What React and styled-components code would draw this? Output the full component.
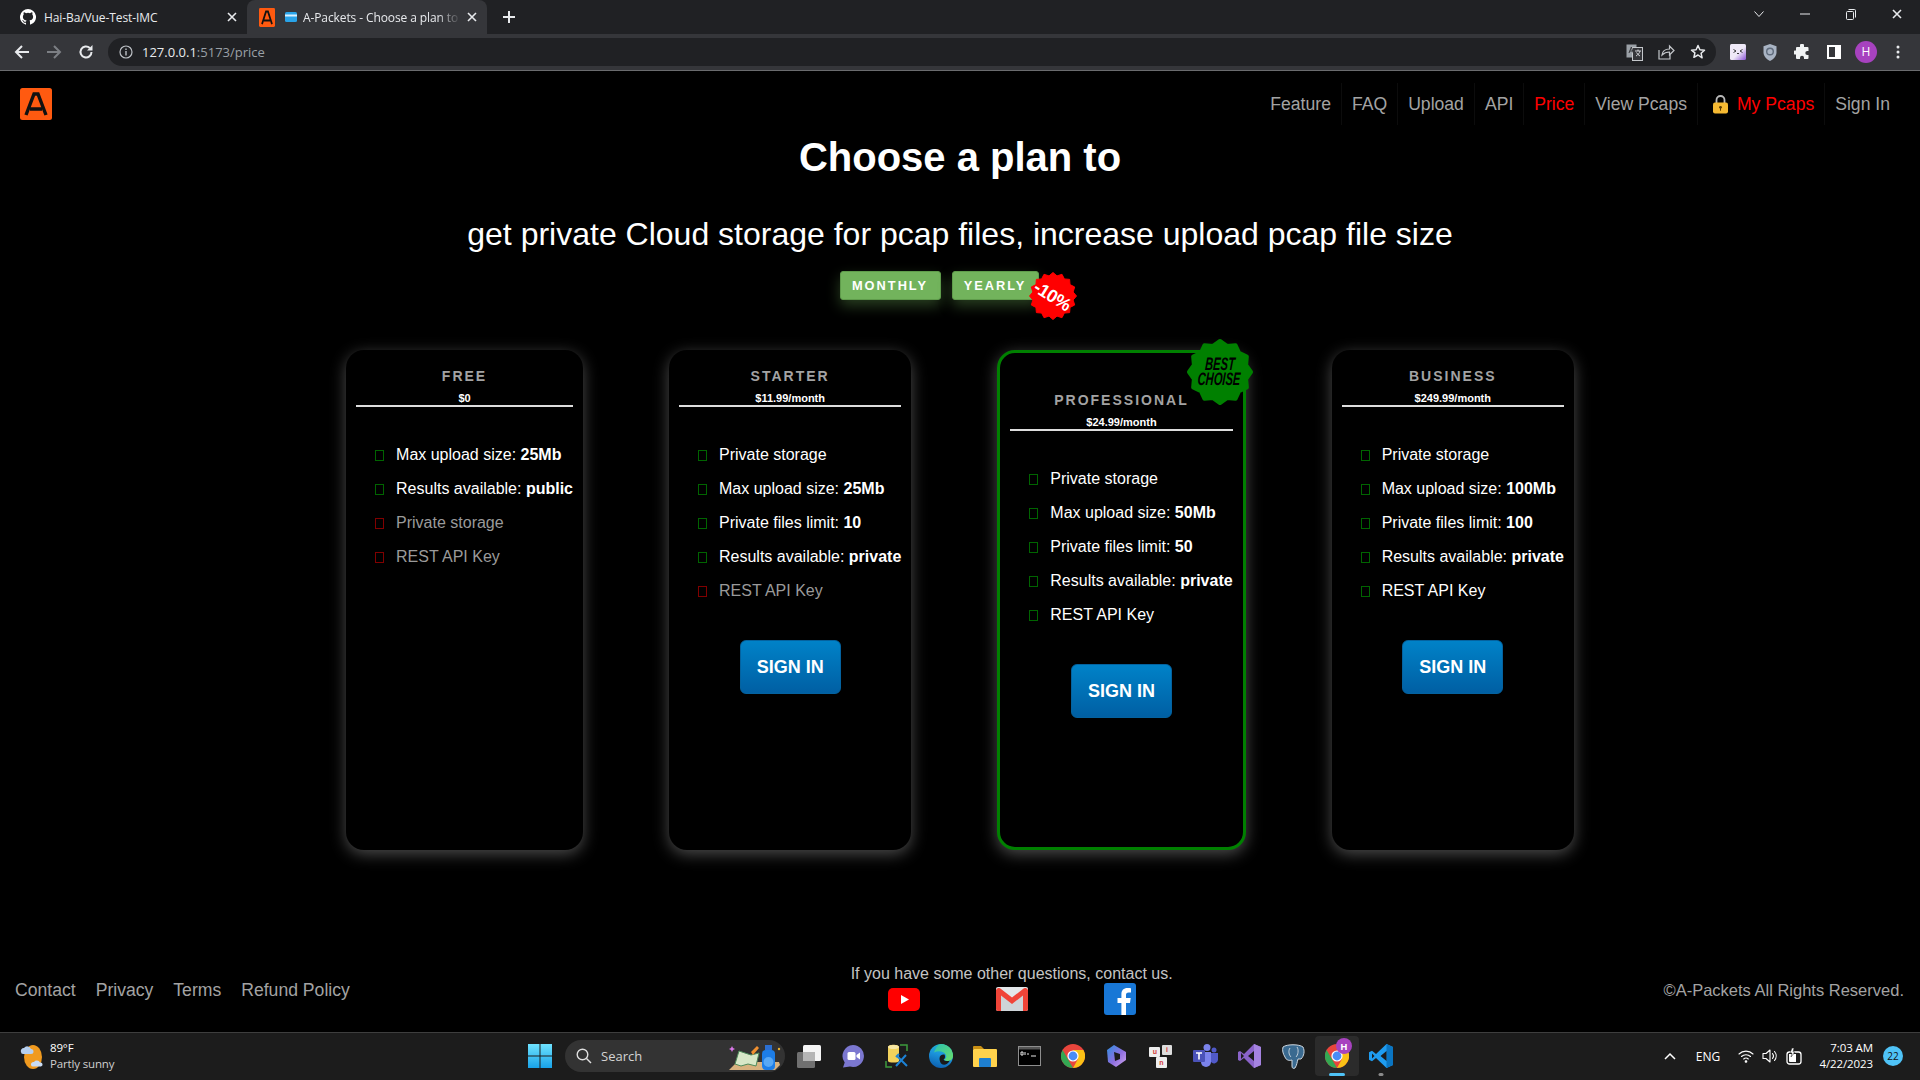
import React from "react";
import styled, { createGlobalStyle } from "styled-components";

const Global = createGlobalStyle`
  html, body { margin: 0; padding: 0; background: #000; }
  body { font-family: "Liberation Sans", Arial, sans-serif; }
  * { box-sizing: border-box; }
`;

const Screen = styled.div`
  width: 1920px; height: 1080px; display: flex; flex-direction: column; overflow: hidden; background: #000;
`;

/* ---------- browser chrome ---------- */
const TabStrip = styled.div`
  height: 34px; background: #202124; display: flex; align-items: stretch; flex: none;
  font: 12px "Open Sans", "Noto Sans", sans-serif; color: #e8eaed;
`;
const Tab = styled.div`
  width: ${p => p.$w}px; display: flex; align-items: center; position: relative;
  padding-left: ${p => p.$pl}px; padding-right: 10px; gap: ${p => p.$gap || 8}px;
  background: ${p => (p.$active ? "#35363a" : "transparent")};
  border-radius: 8px 8px 0 0;
`;
const TabIcons = styled.div`
  display: flex; align-items: center; gap: 10px; flex: none;
`;
const TabTitle = styled.span`
  flex: 1; min-width: 0; white-space: nowrap; overflow: hidden; letter-spacing: -0.1px;
  ${p => p.$fade && "-webkit-mask-image: linear-gradient(90deg,#000 85%,transparent); mask-image: linear-gradient(90deg,#000 85%,transparent);"}
`;
const NewTab = styled.div`
  width: 44px; display: flex; align-items: center; justify-content: center;
`;
const WindowControls = styled.div`
  margin-left: auto; display: flex; align-items: center; height: 28px; padding-right: 0;
`;
const WinBtn = styled.div`
  width: 46px; height: 28px; display: flex; align-items: center; justify-content: center;
`;
const ToolBar = styled.div`
  height: 37px; background: #35363a; border-bottom: 1px solid #6a6b6e; display: flex; align-items: center; flex: none;
`;
const NavBtn = styled.div`
  width: 32px; height: 28px; display: flex; align-items: center; justify-content: center;
`;
const NavBtns = styled.div`
  display: flex; padding-left: 6px; width: 108px;
`;
const Omnibox = styled.div`
  width: 1608px; height: 28px; background: #202124; border-radius: 14px; display: flex; align-items: center;
  padding: 0 2px 0 11px; font: 13px "Open Sans", "Noto Sans", sans-serif;
`;
const Url = styled.span`
  margin-left: 9px; color: #9aa0a6;
  b { color: #e8eaed; font-weight: 400; }
`;
const OmniRight = styled.div`
  margin-left: auto; display: flex; align-items: center; gap: 0;
`;
const ToolIcon = styled.div`
  width: ${p => p.$w || 32}px; height: 28px; display: flex; align-items: center; justify-content: center;
`;
const Extensions = styled.div`
  display: flex; align-items: center; padding-left: 6px;
`;

/* ---------- page ---------- */
const Main = styled.main`
  flex: 1; display: flex; flex-direction: column; background: #000; color: #fff; min-height: 0;
`;
const Header = styled.header`
  height: 66px; flex: none; display: flex; align-items: center; justify-content: space-between; padding: 0 20px;
`;
const NavList = styled.nav`
  display: flex; align-items: center; height: 42px;
`;
const NavLink = styled.a`
  height: 42px; display: flex; align-items: center; gap: 9px; padding: 0 10px 0 ${p => (p.$wide ? 15 : 10)}px;
  border-right: ${p => (p.$last ? "none" : "1px solid #0c0c0c")};
  font-size: 17.6px; color: ${p => (p.$red ? "#f00" : "#a3a3a3")};
`;
const Title = styled.h1`
  margin: 0; height: 40px; line-height: 41px; text-align: center; font-size: 40px; font-weight: 700; color: #fff;
`;
const Subtitle = styled.h2`
  margin: 37px 0 0; height: 40px; line-height: 40px; text-align: center; font-size: 32px; font-weight: 400; color: #fff;
`;
const Toggle = styled.div`
  margin-top: 17px; display: flex; justify-content: center; align-items: flex-start; gap: 11px;
`;
const PeriodBtn = styled.button`
  width: ${p => p.$w}px; height: 29px; padding: 0; border: 1px solid #5f9c4b; border-radius: 3px; background: #72b35c; color: #fff;
  font: 700 12.8px "Liberation Sans", sans-serif; letter-spacing: 2px; white-space: nowrap;
  box-shadow: 0 6px 14px rgba(114, 179, 92, 0.35);
`;
const Burst = styled.div`
  position: relative; flex: none; width: ${p => p.$size}px; height: ${p => p.$size}px;
  display: flex; align-items: center; justify-content: center;
  svg { position: absolute; inset: 0; }
`;
const SaleBadge = styled(Burst)`
  margin: 1px 4px 0 -21px; z-index: 1;
`;
const SaleText = styled.span`
  position: relative; color: #fff; font-weight: 700; font-size: 18px; transform: rotate(32deg); white-space: nowrap; letter-spacing: -0.5px;
`;
const Cards = styled.section`
  margin-top: 30px; display: flex; justify-content: center; gap: 86px;
`;
const Card = styled.article`
  height: 500px; position: relative; background: #000; border-radius: 18px; padding: ${p => (p.$best ? "37px 10px 0" : "16px 10px 0")};
  border: ${p => (p.$best ? "3px solid #008000" : "none")};
  box-shadow: 0 4px 16px rgba(255, 255, 255, 0.3);
  display: flex; flex-direction: column; align-items: stretch;
`;
const BestBadge = styled(Burst)`
  position: absolute; top: -14px; right: -10px;
`;
const BestText = styled.span`
  position: relative; color: #000; font: italic 700 18px/15px "Liberation Sans", sans-serif;
  text-align: center; transform: scaleX(0.62) skewX(-6deg); white-space: nowrap; text-transform: uppercase;
`;
const PlanHead = styled.div`
  text-align: center; border-bottom: 2px solid #ddd; height: 41px;
`;
const PlanName = styled.div`
  font-weight: 700; font-size: 14px; line-height: 20px; letter-spacing: 2px; color: #a3a3a3;
`;
const PlanPrice = styled.div`
  margin-top: 5px; font-weight: 700; font-size: 11px; line-height: 14px; color: #fff;
`;
const Features = styled.ul`
  list-style: none; margin: 31px 0 0; padding: 0 0 0 19px;
`;
const Feature = styled.li`
  height: 34px; display: flex; align-items: center; gap: 12px; font-size: 16px; white-space: nowrap;
  color: ${p => (p.$off ? "#9a9a9a" : "#fff")};
  b { font-weight: 700; }
`;
const Tofu = styled.i`
  display: block; flex: none; width: 9px; height: 11px; border: 1px solid ${p => (p.$off ? "#800000" : "#006400")};
`;
const SignIn = styled.button`
  align-self: center; margin-top: 32px; width: 101px; height: 54px; border: 1px solid #04629f; border-radius: 6px;
  background: linear-gradient(#0082c8, #005fa3); color: #fff; font: 700 18px "Liberation Sans", sans-serif;
`;
const Footer = styled.footer`
  margin-top: auto; padding: 0 16px 17px 5px; display: flex; justify-content: space-between; align-items: center;
  color: #a3a3a3; font-size: 17.6px;
`;
const FootLinks = styled.div`
  display: flex;
`;
const FootLink = styled.a`
  padding: 0 10px; color: #a3a3a3;
`;
const Contact = styled.div`
  display: flex; flex-direction: column; align-items: center; gap: 1px; font-size: 16px; color: #c4c4c4;
  line-height: 17px;
`;
const Socials = styled.div`
  display: flex; align-items: center; gap: 76px; height: 32px;
`;
const Copy = styled.div`
  font-size: 16.5px; color: #a3a3a3;
`;

/* ---------- taskbar ---------- */
const Taskbar = styled.div`
  height: 48px; flex: none; background: #1c1c1c; border-top: 1px solid #3e3e3e; display: flex; align-items: center;
  padding-bottom: 1px;
  font: 12px "Open Sans", "Noto Sans", sans-serif; color: #fff;
`;
const Weather = styled.div`
  flex: 0 0 518px; display: flex; align-items: center; gap: 6px; padding-left: 20px;
`;
const WeatherText = styled.div`
  font-size: 11.5px; line-height: 16px; letter-spacing: -0.15px;
  span { display: block; color: #cfcfcf; }
`;
const Slot = styled.div`
  width: 44px; height: 40px; flex: none; position: relative; display: flex; align-items: center; justify-content: center;
  border-radius: 4px;
  background: ${p => (p.$active ? "#2b2b2b" : "transparent")};
`;
const Indicator = styled.i`
  position: absolute; bottom: 0; left: 50%; transform: translateX(-50%); height: 3px; border-radius: 2px;
  width: ${p => (p.$on ? 16 : 5)}px; background: ${p => (p.$on ? "#4fc3f7" : "#8a8a8a")};
`;
const Search = styled.div`
  width: 220px; height: 32px; margin: 0 2px 0 3px; background: #333; border-radius: 16px; display: flex; align-items: center; gap: 9px;
  padding-left: 11px; position: relative; font-size: 13px; color: #d4d4d4; flex: none;
`;
const SearchArt = styled.div`
  position: absolute; right: 4px; top: 3px; width: 52px; height: 28px;
`;
const Tray = styled.div`
  margin-left: auto; padding-right: 17px; display: flex; align-items: center;
`;
const TrayIcon = styled.div`
  width: ${p => p.$w}px; margin-left: ${p => p.$ml}px; display: flex; align-items: center; justify-content: center; white-space: nowrap;
`;
const Clock = styled.div`
  margin-left: 10px; width: 60px; text-align: right; line-height: 16px; font-size: 11.5px; letter-spacing: -0.1px;
`;
const Notif = styled.div`
  margin-left: 10px; width: 20px; height: 20px; border-radius: 50%; background: #4fc3f7; color: #111; font-size: 10px;
  display: flex; align-items: center; justify-content: center;
`;

/* ---------- drawings ---------- */
function burstPath(n, r1, r2, c) {
  let d = "";
  for (let i = 0; i < n * 2; i++) {
    const r = i % 2 ? r2 : r1;
    const a = (Math.PI * i) / n - Math.PI / 2;
    d += `${i ? "L" : "M"}${(c + r * Math.cos(a)).toFixed(2)} ${(c + r * Math.sin(a)).toFixed(2)}`;
  }
  return d + "Z";
}
const BurstShape = ({ size, n, inner, fill, round }) => (
  <svg width={size} height={size} viewBox={`0 0 ${size} ${size}`}>
    <path d={burstPath(n, size / 2 - round / 2, inner, size / 2)} fill={fill} stroke={fill} strokeWidth={round} strokeLinejoin="round" />
  </svg>
);
const Stroke = { fill: "none", stroke: "currentColor", strokeLinecap: "round", strokeLinejoin: "round" };

const LogoA = ({ s = 32, h = 32 }) => (
  <svg width={s} height={h} viewBox="0 0 32 32" preserveAspectRatio="none">
    <rect width="32" height="32" rx="2.5" fill="#ff5a10" />
    <path d="M6 27 L14 6 H18 L26 27 M10 21 H22" fill="none" stroke="#111" strokeWidth="3.4" strokeLinejoin="miter" />
  </svg>
);
const GitHub = () => (
  <svg width="16" height="16" viewBox="0 0 16 16" fill="#fff">
    <path d="M8 0a8 8 0 0 0-2.53 15.59c.4.07.55-.17.55-.38v-1.49c-2.23.48-2.7-.95-2.7-.95-.36-.92-.89-1.17-.89-1.17-.73-.5.05-.49.05-.49.8.06 1.23.83 1.23.83.71 1.22 1.87.87 2.33.66.07-.52.28-.87.51-1.07-1.78-.2-3.64-.89-3.64-3.95 0-.87.31-1.59.82-2.15-.08-.2-.36-1.02.08-2.12 0 0 .67-.21 2.2.82a7.6 7.6 0 0 1 4 0c1.53-1.04 2.2-.82 2.2-.82.44 1.1.16 1.92.08 2.12.51.56.82 1.27.82 2.15 0 3.07-1.87 3.75-3.65 3.95.29.25.54.73.54 1.48v2.2c0 .21.15.46.55.38A8 8 0 0 0 8 0z" />
  </svg>
);
const CloseX = ({ c = "#e8eaed" }) => (
  <svg width="10" height="10" viewBox="0 0 10 10"><path d="M1 1l8 8M9 1l-8 8" stroke={c} strokeWidth="1.6" /></svg>
);
const Plus = () => (
  <svg width="12" height="12" viewBox="0 0 12 12"><path d="M6 0v12M0 6h12" stroke="#e8eaed" strokeWidth="2" /></svg>
);
const CreditCard = () => (
  <svg width="12" height="10" viewBox="0 0 12 10"><rect width="12" height="10" rx="1.5" fill="#29a3e8" /><rect y="2.5" width="12" height="2" fill="#d9f1ff" /></svg>
);
const Back = ({ c = "#e8eaed", flip }) => (
  <svg width="16" height="16" viewBox="0 0 16 16" style={flip ? { transform: "scaleX(-1)" } : undefined}>
    <path d="M15 8H2M8 2 2 8l6 6" fill="none" stroke={c} strokeWidth="2" />
  </svg>
);
const Reload = () => (
  <svg width="16" height="16" viewBox="0 0 16 16"><path d="M13.5 8a5.5 5.5 0 1 1-1.7-4" fill="none" stroke="#e8eaed" strokeWidth="2" /><path d="M14.5 1v5.5H9z" fill="#e8eaed" /></svg>
);
const Info = () => (
  <svg width="14" height="14" viewBox="0 0 14 14"><circle cx="7" cy="7" r="6" fill="none" stroke="#bdc1c6" strokeWidth="1.2" /><path d="M7 6v4.5M7 3.5v1.4" stroke="#bdc1c6" strokeWidth="1.4" /></svg>
);
const Translate = () => (
  <svg width="17" height="17" viewBox="0 0 17 17">
    <rect x="0.5" y="0.5" width="10" height="13" fill="#9aa0a6" />
    <rect x="6.5" y="3.5" width="10" height="13" fill="#35363a" stroke="#c4c7cb" />
    <path d="M3 9l2.4-6 2 6M3.8 7h3" stroke="#35363a" fill="none" />
    <path d="M9 7h6M12 5.5V7M14 7c-.5 2-2 4-4 5M10.5 8.5c.8 1.5 2 2.8 3.5 3.5" stroke="#dfe1e5" fill="none" strokeWidth=".9" />
  </svg>
);
const Share = () => (
  <svg width="18" height="18" viewBox="0 0 18 18" fill="none" stroke="#c4c7cb" strokeWidth="1.2">
    <path d="M2 7v9h11v-4" /><path d="M5 12c.5-4 3.500-6 7.500-6V3l4.500 4.500L12.500 12V9C9.500 9 7 10 5 12z" />
  </svg>
);
const Star = () => (
  <svg width="16" height="16" viewBox="0 0 16 16"><path d="M8 1.500l1.900 4.200 4.600.5-3.400 3.100 1 4.500L8 11l-4.100 2.300 1-4.500L1.500 6.200l4.600-.5z" fill="none" stroke="#e8eaed" strokeWidth="1.500" strokeLinejoin="round" /></svg>
);
const ExtFace = () => (
  <svg width="16" height="16" viewBox="0 0 16 16">
    <defs><linearGradient id="ef" x1="0" y1="0" x2="1" y2="1"><stop offset=".55" stopColor="#efe9f7" /><stop offset="1" stopColor="#8a52d6" /></linearGradient></defs>
    <rect width="16" height="16" rx="1.500" fill="url(#ef)" />
    <path d="M3.500 5.500 6 7 3.500 8.500M12.500 5.500 10 7l2.500 1.500M7 9.500h2" fill="none" stroke="#222" strokeWidth=".9" />
  </svg>
);
const ExtShield = () => (
  <svg width="14" height="17" viewBox="0 0 14 17"><path d="M7 0l6.500 2.200v6c0 4-3 7-6.500 8.800C3.500 15.200.5 12.200.5 8.200v-6z" fill="#a9b4c4" /><circle cx="7" cy="7.500" r="3.300" fill="none" stroke="#5f6b7c" strokeWidth="1.400" /></svg>
);
const Puzzle = () => (
  <svg width="16" height="16" viewBox="0 0 16 16"><path d="M6 1.500a2 2 0 0 1 4 0V3h3.500a1 1 0 0 1 1 1v3h-1.200a2 2 0 0 0 0 4h1.200v3a1 1 0 0 1-1 1H10v-1.200a2 2 0 0 0-4 0V15H3a1 1 0 0 1-1-1v-3.500H1a2 2 0 0 1 0-4h1V4a1 1 0 0 1 1-1h3z" fill="#f1f3f4" /></svg>
);
const SidePanel = () => (
  <svg width="14" height="14" viewBox="0 0 14 14"><rect x="1" y="1" width="12" height="12" fill="none" stroke="#fff" strokeWidth="2" /><rect x="8" y="1" width="5" height="12" fill="#fff" /></svg>
);
const Avatar = () => (
  <svg width="22" height="22" viewBox="0 0 22 22"><circle cx="11" cy="11" r="11" fill="#a742bf" /><text x="11" y="15" textAnchor="middle" fontSize="12" fill="#fff" fontFamily="Open Sans, sans-serif">H</text></svg>
);
const Dots = () => (
  <svg width="4" height="14" viewBox="0 0 4 14" fill="#e8eaed"><circle cx="2" cy="2" r="1.500" /><circle cx="2" cy="7" r="1.500" /><circle cx="2" cy="12" r="1.500" /></svg>
);
const Lock = () => (
  <svg width="15" height="19" viewBox="0 0 15 19">
    <path d="M3.500 8V5a4 4 0 0 1 8 0v3" fill="none" stroke="#b9b9b9" strokeWidth="1.800" />
    <rect y="7.500" width="15" height="11" rx="2" fill="#f5b932" />
    <circle cx="7.500" cy="12.300" r="1.400" fill="#5a3a00" /><rect x="7" y="12.500" width="1" height="3.200" fill="#5a3a00" />
  </svg>
);
const YouTube = () => (
  <svg width="32" height="23" viewBox="0 0 32 23"><rect width="32" height="23" rx="5" fill="#f00" /><path d="M13 7l8 4.500-8 4.500z" fill="#fff" /></svg>
);
const Gmail = () => (
  <svg width="32" height="24" viewBox="0 0 32 24">
    <rect width="32" height="24" rx="2" fill="#e3e7e9" />
    <path d="M5 24V8l11 8.500L27 8v16z" fill="#ced4d8" />
    <path d="M0 3a3 3 0 0 1 5-1l11 8.500L27 2a3 3 0 0 1 5 1v19a2 2 0 0 1-2 2h-3V8.500L16 17 5 8.500V24H2a2 2 0 0 1-2-2z" fill="#f04438" />
  </svg>
);
const Facebook = () => (
  <svg width="32" height="32" viewBox="0 0 32 32"><rect width="32" height="32" rx="3" fill="#1877d6" /><path d="M22 32V20h4l.7-5H22v-3c0-1.500.6-2.500 2.600-2.500H27V5.200c-.6-.1-2-.2-3.600-.2-3.600 0-6 2.200-6 6.200V15H13.500v5h3.900v12z" fill="#fff" /></svg>
);

const WeatherIcon = () => (
  <svg width="24" height="27" viewBox="0 0 24 27">
    <ellipse cx="13" cy="14" rx="9" ry="12" fill="#f09a1f" />
    <path d="M1 9a3 3 0 0 1 3-4 4 4 0 0 1 7 1 2.500 2.500 0 0 1 0 5H3a2 2 0 0 1-2-2z" fill="#b6cfee" />
    <path d="M11 22a2.500 2.500 0 0 1 3-3 3.500 3.500 0 0 1 6 .5 2 2 0 0 1 1 4h-8a2 2 0 0 1-2-1.500z" fill="#c9dcf5" />
  </svg>
);
const WinLogo = () => (
  <svg width="24" height="24" viewBox="0 0 24 24">
    <defs><linearGradient id="wl" x1="0" y1="0" x2="0" y2="1"><stop offset="0" stopColor="#6fe3ff" /><stop offset="1" stopColor="#18a2e8" /></linearGradient></defs>
    <path d="M0 0h11.500v11.500H0zM12.500 0H24v11.500H12.500zM0 12.500h11.500V24H0zM12.500 12.500H24V24H12.500z" fill="url(#wl)" />
  </svg>
);
const SearchGlass = () => (
  <svg width="16" height="16" viewBox="0 0 16 16" fill="none" stroke="#e0e0e0" strokeWidth="1.400"><circle cx="6.500" cy="6.500" r="5.300" /><path d="M10.500 10.500 15 15" /></svg>
);
const SearchArtwork = () => (
  <svg width="52" height="28" viewBox="0 0 52 28">
    <path d="M0 27 8 19h42l1 3-5 5z" fill="#d8b27f" />
    <path d="M6 21 10 8l12 4 8-2-3 13-8-2-7 2z" fill="#d8e8c8" stroke="#4e8a5a" />
    <path d="M22 9l6-6 2 2-6 7z" fill="#f09030" />
    <path d="M3 3l1 2 2 1-2 1-1 2-1-2-2-1 2-1z" fill="#d977e8" />
    <rect x="33" y="7" width="13" height="20" rx="4" fill="#1d7ee8" /><rect x="36" y="2" width="7" height="5" fill="#2b6fd1" /><ellipse cx="39.500" cy="19" rx="5" ry="5" fill="#57a8f5" />
    <circle cx="50" cy="6" r="1.200" fill="#e8b030" />
  </svg>
);
const TaskView = () => (
  <svg width="24" height="24" viewBox="0 0 24 24"><rect x="6" y="1" width="18" height="16" rx="1.500" fill="#f4f4f4" /><rect x="0" y="8" width="18" height="16" rx="1.500" fill="#7a7a7a" opacity=".9" /><rect x="6" y="8" width="12" height="9" fill="#b5b5b5" /></svg>
);
const ChatIcon = () => (
  <svg width="24" height="24" viewBox="0 0 24 24"><path d="M12 1a11 11 0 1 1-3 21.600L2 23.500l1.700-5A11 11 0 0 1 12 1z" fill="#7b77d0" /><rect x="6.500" y="8" width="8" height="8" rx="1.500" fill="#fff" /><path d="M15.500 11l3.500-2.500v7L15.500 13z" fill="#fff" /></svg>
);
const SqlTools = () => (
  <svg width="24" height="24" viewBox="0 0 24 24">
    <path d="M3 3c0-3 11-3 11 0v14c0 2-11 2-11 0z" fill="#f2d25c" /><ellipse cx="8.500" cy="3" rx="5.500" ry="2" fill="#f7e7a5" />
    <path d="M15 1h7v6M1 17v6h6" fill="none" stroke="#3c9a3c" strokeWidth="1.500" />
    <path d="M11 22 21 11M12 12l10 10M11 13l3-3" fill="none" stroke="#1d83d6" strokeWidth="2" />
  </svg>
);
const Edge = () => (
  <svg width="24" height="24" viewBox="0 0 24 24">
    <defs>
      <linearGradient id="eg" x1="0.2" y1="1" x2="0.5" y2="0"><stop offset="0" stopColor="#0b5cad" /><stop offset=".6" stopColor="#1c96dd" /><stop offset="1" stopColor="#1fb5c9" /></linearGradient>
      <linearGradient id="eg2" x1="0" y1="0" x2="1" y2="1"><stop offset="0" stopColor="#2cc0b0" /><stop offset="1" stopColor="#6adf6a" /></linearGradient>
    </defs>
    <circle cx="12" cy="12" r="12" fill="url(#eg)" />
    <path d="M12 0a12 12 0 0 1 12 12c0 3-2.500 5-5.500 5-2 0-3.200-.6-3.500-1.200 2-1 2.800-3.200 1.800-5C15.500 8 10 6 5 8.500 7 3.500 9.500 0 12 0z" fill="url(#eg2)" />
    <path d="M10.500 14.500C10.500 11.500 13 10 15.500 10.500c1 1.800.5 4.300-1 5.300 1 1.200 4 1.700 6.200.7-2 4.300-6 5-8 3.500-1.500-1.200-2.200-3.500-2.200-5.500z" fill="#1a1a1a" />
  </svg>
);
const Folder = () => (
  <svg width="24" height="22" viewBox="0 0 24 22"><path d="M0 2a1 1 0 0 1 1-1h7l3 3H0z" fill="#c98f14" /><rect y="4" width="24" height="18" rx="1" fill="#ffd24c" /><rect x="6" y="13" width="12" height="9" rx="1" fill="#1e7fd0" /></svg>
);
const Cmd = () => (
  <svg width="23" height="20" viewBox="0 0 23 20"><rect x=".5" y=".5" width="22" height="19" fill="#000" stroke="#8e8e8e" /><rect x="1" y="1" width="21" height="2.500" fill="#555" /><path d="M3 6h2v3H3zM7 6v3M10 7v2M13 10h5" stroke="#e8e8e8" strokeWidth="1" fill="none" /></svg>
);
const Chrome = ({ size = 24 }) => (
  <svg width={size} height={size} viewBox="0 0 24 24">
    <circle cx="12" cy="12" r="12" fill="#e8453c" />
    <path d="M12 24A12 12 0 0 1 1.600 6L7 15.200 12 24z" fill="#34a853" />
    <path d="M12 24a12 12 0 0 0 10.400-18H12l5 9z" fill="#fbc116" />
    <circle cx="12" cy="12" r="5.600" fill="#fff" /><circle cx="12" cy="12" r="4.400" fill="#4a8cf7" />
  </svg>
);
const Copilot = () => (
  <svg width="20" height="22" viewBox="0 0 20 22">
    <defs><linearGradient id="cp" x1="0" y1="0" x2="1" y2="1"><stop offset="0" stopColor="#2b8fe0" /><stop offset=".55" stopColor="#8f6fe0" /><stop offset="1" stopColor="#d3a8ee" /></linearGradient></defs>
    <path d="M7 0l12 7v8l-10 7-8-5L0 5z" fill="url(#cp)" /><path d="M7 7l6 2v5l-5 2z" fill="#1c1c1c" />
  </svg>
);
const KeysIcon = () => (
  <svg width="24" height="24" viewBox="0 0 24 24" fontFamily="Liberation Sans, sans-serif" fontWeight="700" fontSize="7" fill="#d23a3a" textAnchor="middle">
    <rect x="0" y="3" width="11" height="10" rx="1" fill="#eee" /><rect x="13" y="1" width="10" height="10" rx="1" fill="#ddd" /><rect x="7" y="13" width="11" height="11" rx="1" fill="#eee" />
    <text x="6" y="10">u</text><text x="18" y="8">i</text><text x="12.500" y="21">n</text>
  </svg>
);
const Teams = () => (
  <svg width="25" height="24" viewBox="0 0 25 24">
    <circle cx="14" cy="3.500" r="3.500" fill="#7b83eb" /><circle cx="21" cy="6" r="2.500" fill="#5059c9" />
    <path d="M8 8h10v10a5 5 0 0 1-10 0z" fill="#7b83eb" /><path d="M18 9h7v7a4 4 0 0 1-7 2z" fill="#5059c9" />
    <rect x="0" y="6" width="12" height="12" rx="1" fill="#4a52b8" /><path d="M3 9h6M6 9v6.500" stroke="#fff" strokeWidth="1.600" />
  </svg>
);
const VS = () => (
  <svg width="23" height="24" viewBox="0 0 23 24"><path d="M16 0l7 3v18l-7 3-10-10-4 3-2-1V8l2-1 4 3z" fill="#8a63c9" /><path d="M16 0l7 3v18l-7 3z" fill="#a583e0" /><path d="M16 7l-6 5 6 5zM3 9v6l3-3z" fill="#1c1c1c" /></svg>
);
const Postgres = () => (
  <svg width="24" height="25" viewBox="0 0 24 25">
    <path d="M2 3C6 0 18 0 22 3c2 4 1 9-2 12h-3c-1 3-1 6-3 9-2 1-3 0-3-2v-6c-3 1-6 0-7-3C2 10 1 6 2 3z" fill="#3a6a90" stroke="#cfd8e0" strokeWidth="1" />
    <path d="M9 4C7 7 8 11 10 13M16 3c2 3 1 8-1 10" fill="none" stroke="#cfd8e0" strokeWidth=".9" />
  </svg>
);
const ChromeBadge = () => (
  <svg width="16" height="16" viewBox="0 0 16 16" style={{ position: "absolute", top: 2, left: 21 }}>
    <circle cx="8" cy="8" r="8" fill="#a742bf" /><text x="8" y="11.500" textAnchor="middle" fontSize="9.500" fontWeight="700" fill="#fff" fontFamily="Open Sans, sans-serif">H</text>
  </svg>
);
const VSCode = () => (
  <svg width="24" height="24" viewBox="0 0 24 24"><path d="M17.500 0 24 3v18l-6.500 3L7 14l-4 3.200-3-1.500V8.300l3-1.500L7 10z" fill="#1f9cf0" /><path d="M17.500 0 24 3v18l-6.500 3z" fill="#0a75c2" /><path d="M17.500 7l-6 5 6 5zM3 9.500v5L5.500 12z" fill="#1c1c1c" /></svg>
);
const Caret = () => (
  <svg width="12" height="8" viewBox="0 0 12 8"><path d="M1 7l5-5 5 5" fill="none" stroke="#fff" strokeWidth="1.500" /></svg>
);
const Wifi = () => (
  <svg width="16" height="14" viewBox="0 0 16 14" {...Stroke} stroke="#fff" strokeWidth="1.100"><path d="M1 5a10 10 0 0 1 14 0M3.500 7.500a6.500 6.500 0 0 1 9 0M5.700 10a3.200 3.200 0 0 1 4.600 0" /><circle cx="8" cy="12.500" r=".8" fill="#fff" /></svg>
);
const Volume = () => (
  <svg width="17" height="16" viewBox="0 0 17 16" {...Stroke} stroke="#fff" strokeWidth="1.100"><path d="M1 5.500h3L8 2v12L4 10.500H1zM10.500 5.500a4 4 0 0 1 0 5M12.500 3.500a7 7 0 0 1 0 9" /></svg>
);
const Battery = () => (
  <svg width="16" height="17" viewBox="0 0 16 17"><rect x="1" y="4" width="14" height="12" rx="2.500" fill="none" stroke="#fff" strokeWidth="1.300" /><path d="M3 6h7v8H4a1 1 0 0 1-1-1z" fill="#fff" /><path d="M6 0 4 5h2l-1 4 4-5H7l1-4z" fill="#fff" stroke="#1c1c1c" strokeWidth=".5" /></svg>
);

/* ---------- data ---------- */
const plans = [
  { name: "FREE", price: "$0", features: [
    ["Max upload size: ", "25Mb"], ["Results available: ", "public"], ["Private storage", null, true], ["REST API Key", null, true],
  ] },
  { name: "STARTER", price: "$11.99/month", signIn: true, features: [
    ["Private storage"], ["Max upload size: ", "25Mb"], ["Private files limit: ", "10"], ["Results available: ", "private"], ["REST API Key", null, true],
  ] },
  { name: "PROFESSIONAL", price: "$24.99/month", signIn: true, best: true, features: [
    ["Private storage"], ["Max upload size: ", "50Mb"], ["Private files limit: ", "50"], ["Results available: ", "private"], ["REST API Key"],
  ] },
  { name: "BUSINESS", price: "$249.99/month", signIn: true, features: [
    ["Private storage"], ["Max upload size: ", "100Mb"], ["Private files limit: ", "100"], ["Results available: ", "private"], ["REST API Key"],
  ] },
];

const taskIcons = [
  TaskView, ChatIcon, SqlTools, Edge, Folder, Cmd, Chrome, Copilot, KeysIcon, Teams, VS, Postgres,
];

export default function App() {
  return (
    <Screen>
      <Global />
      <TabStrip>
        <Tab $w={247} $pl={20} $gap={8}>
          <GitHub />
          <TabTitle>Hai-Ba/Vue-Test-IMC</TabTitle>
          <CloseX />
        </Tab>
        <Tab $w={240} $active $pl={12} $gap={6}>
          <TabIcons>
            <LogoA s={16} h={19} />
            <CreditCard />
          </TabIcons>
          <TabTitle $fade>A-Packets - Choose a plan to</TabTitle>
          <CloseX />
        </Tab>
        <NewTab><Plus /></NewTab>
        <WindowControls>
          <WinBtn><svg width="10" height="6" viewBox="0 0 10 6"><path d="M.5.5 5 5.500 9.500.5" fill="none" stroke="#e8eaed" /></svg></WinBtn>
          <WinBtn><svg width="10" height="2" viewBox="0 0 10 2"><path d="M0 1h10" stroke="#e8eaed" /></svg></WinBtn>
          <WinBtn><svg width="10" height="11" viewBox="0 0 10 11" fill="none" stroke="#e8eaed"><rect x=".5" y="2.500" width="7" height="8" rx="1" /><path d="M2.500.5h6a1 1 0 0 1 1 1v7" /></svg></WinBtn>
          <WinBtn><CloseX /></WinBtn>
        </WindowControls>
      </TabStrip>
      <ToolBar>
        <NavBtns>
          <NavBtn><Back /></NavBtn>
          <NavBtn><Back c="#7c7f84" flip /></NavBtn>
          <NavBtn><Reload /></NavBtn>
        </NavBtns>
        <Omnibox>
          <Info />
          <Url><b>127.0.0.1</b>:5173/price</Url>
          <OmniRight>
            <ToolIcon><Translate /></ToolIcon>
            <ToolIcon><Share /></ToolIcon>
            <ToolIcon><Star /></ToolIcon>
          </OmniRight>
        </Omnibox>
        <Extensions>
          <ToolIcon><ExtFace /></ToolIcon>
          <ToolIcon><ExtShield /></ToolIcon>
          <ToolIcon><Puzzle /></ToolIcon>
          <ToolIcon><SidePanel /></ToolIcon>
          <ToolIcon><Avatar /></ToolIcon>
          <ToolIcon><Dots /></ToolIcon>
        </Extensions>
      </ToolBar>

      <Main>
        <Header>
          <LogoA />
          <NavList>
            <NavLink>Feature</NavLink>
            <NavLink>FAQ</NavLink>
            <NavLink>Upload</NavLink>
            <NavLink>API</NavLink>
            <NavLink $red>Price</NavLink>
            <NavLink>View Pcaps</NavLink>
            <NavLink $red $wide><Lock />My Pcaps</NavLink>
            <NavLink $last>Sign In</NavLink>
          </NavList>
        </Header>
        <Title>Choose a plan to</Title>
        <Subtitle>get private Cloud storage for pcap files, increase upload pcap file size</Subtitle>
        <Toggle>
          <PeriodBtn $w={101}>MONTHLY</PeriodBtn>
          <PeriodBtn $w={87}>YEARLY</PeriodBtn>
          <SaleBadge $size={48}>
            <BurstShape size={48} n={16} inner={20.5} fill="#f00" round={1} />
            <SaleText>-10%</SaleText>
          </SaleBadge>
        </Toggle>
        <Cards>
          {plans.map(plan => (
            <Card key={plan.name} $best={plan.best}>
              {plan.best && (
                <BestBadge $size={66}>
                  <BurstShape size={66} n={12} inner={27} fill="#008000" round={4} />
                  <BestText>Best<br />Choise</BestText>
                </BestBadge>
              )}
              <PlanHead>
                <PlanName>{plan.name}</PlanName>
                <PlanPrice>{plan.price}</PlanPrice>
              </PlanHead>
              <Features>
                {plan.features.map(([text, strong, off]) => (
                  <Feature key={text} $off={off}>
                    <Tofu $off={off} />
                    <span>{text}{strong && <b>{strong}</b>}</span>
                  </Feature>
                ))}
              </Features>
              {plan.signIn && <SignIn>SIGN IN</SignIn>}
            </Card>
          ))}
        </Cards>
        <Footer>
          <FootLinks>
            <FootLink>Contact</FootLink>
            <FootLink>Privacy</FootLink>
            <FootLink>Terms</FootLink>
            <FootLink>Refund Policy</FootLink>
          </FootLinks>
          <Contact>
            <span>If you have some other questions, contact us.</span>
            <Socials>
              <YouTube />
              <Gmail />
              <Facebook />
            </Socials>
          </Contact>
          <Copy>©A-Packets All Rights Reserved.</Copy>
        </Footer>
      </Main>

      <Taskbar>
        <Weather>
          <WeatherIcon />
          <WeatherText>89°F<span>Partly sunny</span></WeatherText>
        </Weather>
        <Slot><WinLogo /></Slot>
        <Search>
          <SearchGlass />
          Search
          <SearchArt><SearchArtwork /></SearchArt>
        </Search>
        {taskIcons.map((Icon, i) => <Slot key={i}><Icon /></Slot>)}
        <Slot $active>
          <Chrome />
          <ChromeBadge />
          <Indicator $on />
        </Slot>
        <Slot>
          <VSCode />
          <Indicator />
        </Slot>
        <Tray>
          <TrayIcon $w={16} $ml={0}><Caret /></TrayIcon>
          <TrayIcon $w={24} $ml={18}>ENG</TrayIcon>
          <TrayIcon $w={18} $ml={17}><Wifi /></TrayIcon>
          <TrayIcon $w={18} $ml={6}><Volume /></TrayIcon>
          <TrayIcon $w={18} $ml={6}><Battery /></TrayIcon>
          <Clock>7:03 AM<br />4/22/2023</Clock>
          <Notif>22</Notif>
        </Tray>
      </Taskbar>
    </Screen>
  );
}
